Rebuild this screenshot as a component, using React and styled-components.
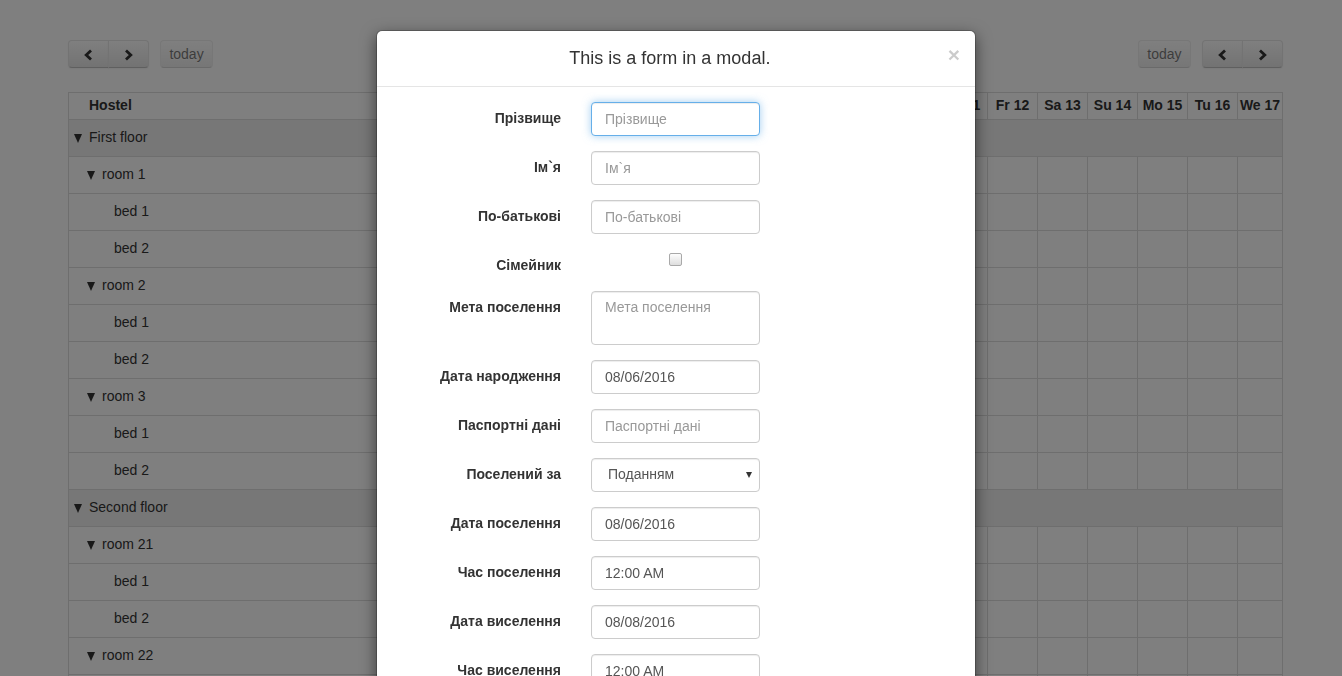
import React from 'react';
import styled, { createGlobalStyle, css } from 'styled-components';

const GlobalStyle = createGlobalStyle`
    *, *::before, *::after {
        box-sizing: border-box;
    }
    html, body {
        margin: 0;
        overflow: hidden;
        background: #fff;
    }
    body {
        font-family: 'Liberation Sans', Arial, Helvetica, sans-serif;
        font-size: 14px;
        line-height: 1.42857;
        color: #333;
    }
`;

const weekDays = ['Mo', 'Tu', 'We', 'Th', 'Fr', 'Sa', 'Su'];
const days = Array.from({ length: 17 }, (_, i) => `${weekDays[i % 7]} ${i + 1}`);

const resources = [
    { kind: 'floor', name: 'First floor' },
    { kind: 'room', name: 'room 1' },
    { kind: 'bed', name: 'bed 1' },
    { kind: 'bed', name: 'bed 2' },
    { kind: 'room', name: 'room 2' },
    { kind: 'bed', name: 'bed 1' },
    { kind: 'bed', name: 'bed 2' },
    { kind: 'room', name: 'room 3' },
    { kind: 'bed', name: 'bed 1' },
    { kind: 'bed', name: 'bed 2' },
    { kind: 'floor', name: 'Second floor' },
    { kind: 'room', name: 'room 21' },
    { kind: 'bed', name: 'bed 1' },
    { kind: 'bed', name: 'bed 2' },
    { kind: 'room', name: 'room 22' },
    { kind: 'bed', name: 'bed 1' },
    { kind: 'bed', name: 'bed 2' },
];

const indent = { room: 18, bed: 45 };

function Chevron({ dir }) {
    const points = dir === 'left' ? '7,1.5 2.2,6 7,10.5' : '2,1.5 6.8,6 2,10.5';
    return (
        <svg width="9" height="12" viewBox="0 0 9 12">
            <polyline points={points} fill="none" stroke="#333" strokeWidth="2.8" />
        </svg>
    );
}

function NavGroup() {
    return (
        <ButtonGroup>
            <CalButton first>
                <Chevron dir="left" />
            </CalButton>
            <CalButton last>
                <Chevron dir="right" />
            </CalButton>
        </ButtonGroup>
    );
}

function Scheduler() {
    return (
        <Calendar>
            <Toolbar>
                <ToolbarSide>
                    <NavGroup />
                    <CalButton disabled>today</CalButton>
                </ToolbarSide>
                <ToolbarSide>
                    <CalButton disabled>today</CalButton>
                    <NavGroup />
                </ToolbarSide>
            </Toolbar>
            <Grid>
                <HeadCell resource>Hostel</HeadCell>
                {days.map(d => (
                    <HeadCell key={d}>{d}</HeadCell>
                ))}
                {resources.map((r, i) =>
                    r.kind === 'floor' ? (
                        <FloorRow key={i}>
                            <Expander />
                            {r.name}
                        </FloorRow>
                    ) : (
                        <React.Fragment key={i}>
                            <ResourceCell style={{ paddingLeft: indent[r.kind] }}>
                                {r.kind === 'room' && <Expander />}
                                {r.name}
                            </ResourceCell>
                            {days.map(d => (
                                <DayCell key={d} />
                            ))}
                        </React.Fragment>
                    )
                )}
            </Grid>
        </Calendar>
    );
}

function FormModal() {
    return (
        <>
            <Backdrop />
            <ModalWrap>
                <Dialog>
                    <ModalHeader>
                        <ModalTitle>This is a form in a modal.</ModalTitle>
                        <Close type="button">×</Close>
                    </ModalHeader>
                    <ModalBody>
                        <Form>
                            <Label>Прізвище</Label>
                            <Field>
                                <Input placeholder="Прізвище" focused />
                            </Field>
                            <Label>Ім`я</Label>
                            <Field>
                                <Input placeholder="Ім`я" />
                            </Field>
                            <Label>По-батькові</Label>
                            <Field>
                                <Input placeholder="По-батькові" />
                            </Field>
                            <Label>Сімейник</Label>
                            <Field>
                                <Checkbox type="checkbox" />
                            </Field>
                            <Label>Мета поселення</Label>
                            <Field>
                                <TextArea rows={2} placeholder="Мета поселення" />
                            </Field>
                            <Label>Дата народження</Label>
                            <Field>
                                <Input defaultValue="08/06/2016" />
                            </Field>
                            <Label>Паспортні дані</Label>
                            <Field>
                                <Input placeholder="Паспортні дані" />
                            </Field>
                            <Label>Поселений за</Label>
                            <Field>
                                <SelectWrap>
                                    <Select defaultValue="podannya">
                                        <option value="podannya">Поданням</option>
                                        <option value="napravlennya">Направленням</option>
                                    </Select>
                                    <SelectArrow />
                                </SelectWrap>
                            </Field>
                            <Label>Дата поселення</Label>
                            <Field>
                                <Input defaultValue="08/06/2016" />
                            </Field>
                            <Label>Час поселення</Label>
                            <Field>
                                <Input defaultValue="12:00 AM" />
                            </Field>
                            <Label>Дата виселення</Label>
                            <Field>
                                <Input defaultValue="08/08/2016" />
                            </Field>
                            <Label>Час виселення</Label>
                            <Field>
                                <Input defaultValue="12:00 AM" />
                            </Field>
                        </Form>
                    </ModalBody>
                </Dialog>
            </ModalWrap>
        </>
    );
}

export default function App() {
    return (
        <>
            <GlobalStyle />
            <Scheduler />
            <FormModal />
        </>
    );
}

// calendar styles

const Calendar = styled.div`
    width: 1215px;
    margin: 40px 0 0 68px;
`;

const Toolbar = styled.div`
    display: flex;
    justify-content: space-between;
    margin-bottom: 24px;
`;

const ToolbarSide = styled.div`
    display: flex;
    gap: 11px;
`;

const ButtonGroup = styled.div`
    display: flex;
`;

const CalButton = styled.button`
    height: 28px;
    min-width: ${props => (props.first || props.last ? '41px' : '0')};
    padding: 1px 0.6em 0;
    display: inline-flex;
    align-items: center;
    justify-content: center;
    font: inherit;
    font-size: 14px;
    color: #333;
    background-color: #f5f5f5;
    background-image: linear-gradient(to bottom, #fff, #e6e6e6);
    border: 1px solid;
    border-color: #e6e6e6 #e6e6e6 #bfbfbf;
    border-radius: 4px;
    text-shadow: 0 1px 1px rgba(255, 255, 255, 0.75);
    box-shadow: inset 0 1px 0 rgba(255, 255, 255, 0.2),
        0 1px 2px rgba(0, 0, 0, 0.05);
    ${props => props.first && 'border-top-right-radius: 0; border-bottom-right-radius: 0;'}
    ${props =>
        props.last &&
        'border-top-left-radius: 0; border-bottom-left-radius: 0; margin-left: -1px;'}
    &:disabled {
        opacity: 0.65;
        box-shadow: none;
    }
`;

const Grid = styled.div`
    display: grid;
    grid-template-columns: 369px repeat(16, 50px) 45px;
    border-top: 1px solid #ddd;
    border-right: 1px solid #ddd;
`;

const cellBorders = css`
    border-left: 1px solid #ddd;
    border-bottom: 1px solid #ddd;
`;

const HeadCell = styled.div`
    ${cellBorders}
    height: 27px;
    display: flex;
    align-items: center;
    justify-content: ${props => (props.resource ? 'flex-start' : 'center')};
    padding-left: ${props => (props.resource ? '20px' : '0')};
    font-weight: bold;
    white-space: nowrap;
    overflow: hidden;
`;

const FloorRow = styled.div`
    ${cellBorders}
    grid-column: 1 / -1;
    height: 37px;
    display: flex;
    align-items: center;
    padding-left: 5px;
    background: #eee;
`;

const ResourceCell = styled.div`
    ${cellBorders}
    height: 37px;
    display: flex;
    align-items: center;
`;

const DayCell = styled.div`
    ${cellBorders}
    height: 37px;
`;

const Expander = styled.span`
    flex: none;
    width: 0;
    height: 0;
    margin: 0 7px 0 0;
    border-left: 4.5px solid transparent;
    border-right: 4.5px solid transparent;
    border-top: 9px solid #333;
`;

// modal styles

const Backdrop = styled.div`
    position: fixed;
    inset: 0;
    background: rgba(0, 0, 0, 0.5);
`;

const ModalWrap = styled.div`
    position: fixed;
    inset: 0;
    overflow: hidden;
    display: flex;
    justify-content: center;
    align-items: flex-start;
    padding-left: 10px;
`;

const Dialog = styled.div`
    width: 600px;
    margin-top: 30px;
    background: #fff;
    border: 1px solid rgba(0, 0, 0, 0.2);
    border-radius: 6px;
    box-shadow: 0 5px 15px rgba(0, 0, 0, 0.5);
    background-clip: padding-box;
`;

const ModalHeader = styled.div`
    display: flex;
    align-items: flex-start;
    padding: 15px;
    border-bottom: 1px solid #e5e5e5;
`;

const ModalTitle = styled.h4`
    flex: 1;
    margin: 0;
    font-size: 18px;
    font-weight: 500;
    line-height: 25px;
    text-align: center;
`;

const Close = styled.button`
    margin-top: -2px;
    padding: 0;
    background: transparent;
    border: 0;
    font-family: inherit;
    font-size: 21px;
    font-weight: bold;
    line-height: 1;
    color: #000;
    text-shadow: 0 1px 0 #fff;
    opacity: 0.2;
`;

const ModalBody = styled.div`
    padding: 15px;
`;

const Form = styled.form`
    display: grid;
    grid-template-columns: 199px 199px;
    row-gap: 15px;
    margin: 0 -15px;
`;

const Label = styled.label`
    padding: 7px 15px 0;
    text-align: right;
    font-weight: bold;
`;

const Field = styled.div`
    padding: 0 15px;
`;

const controlStyle = css`
    display: block;
    width: 100%;
    padding: 6px 12px 6px 13px;
    font-family: inherit;
    font-size: 14px;
    line-height: 1.42857;
    color: #555;
    background: #fff;
    border: 1px solid #ccc;
    border-radius: 4px;
    box-shadow: inset 0 1px 1px rgba(0, 0, 0, 0.075);
    outline: none;
    &::placeholder {
        color: #999;
    }
`;

const Input = styled.input.withConfig({
    shouldForwardProp: prop => prop !== 'focused',
})`
    ${controlStyle}
    height: 34px;
    ${props =>
        props.focused &&
        css`
            border-color: #66afe9;
            box-shadow: inset 0 1px 1px rgba(0, 0, 0, 0.075),
                0 0 8px rgba(102, 175, 233, 0.6);
        `}
`;

const TextArea = styled.textarea`
    ${controlStyle}
    height: 54px;
    resize: none;
`;

const SelectWrap = styled.div`
    position: relative;
`;

const Select = styled.select`
    ${controlStyle}
    height: 34px;
    padding-left: 16px;
    appearance: none;
`;

const SelectArrow = styled.span`
    position: absolute;
    right: 8px;
    top: 14px;
    width: 0;
    height: 0;
    border-left: 3px solid transparent;
    border-right: 3px solid transparent;
    border-top: 6px solid #333;
    pointer-events: none;
`;

const Checkbox = styled.input`
    display: block;
    width: 13px;
    height: 13px;
    margin: 4px auto 0;
    appearance: none;
    border: 1px solid #a9a9a9;
    border-radius: 2px;
    background: linear-gradient(to bottom, #fdfdfd, #dedede);
`;
